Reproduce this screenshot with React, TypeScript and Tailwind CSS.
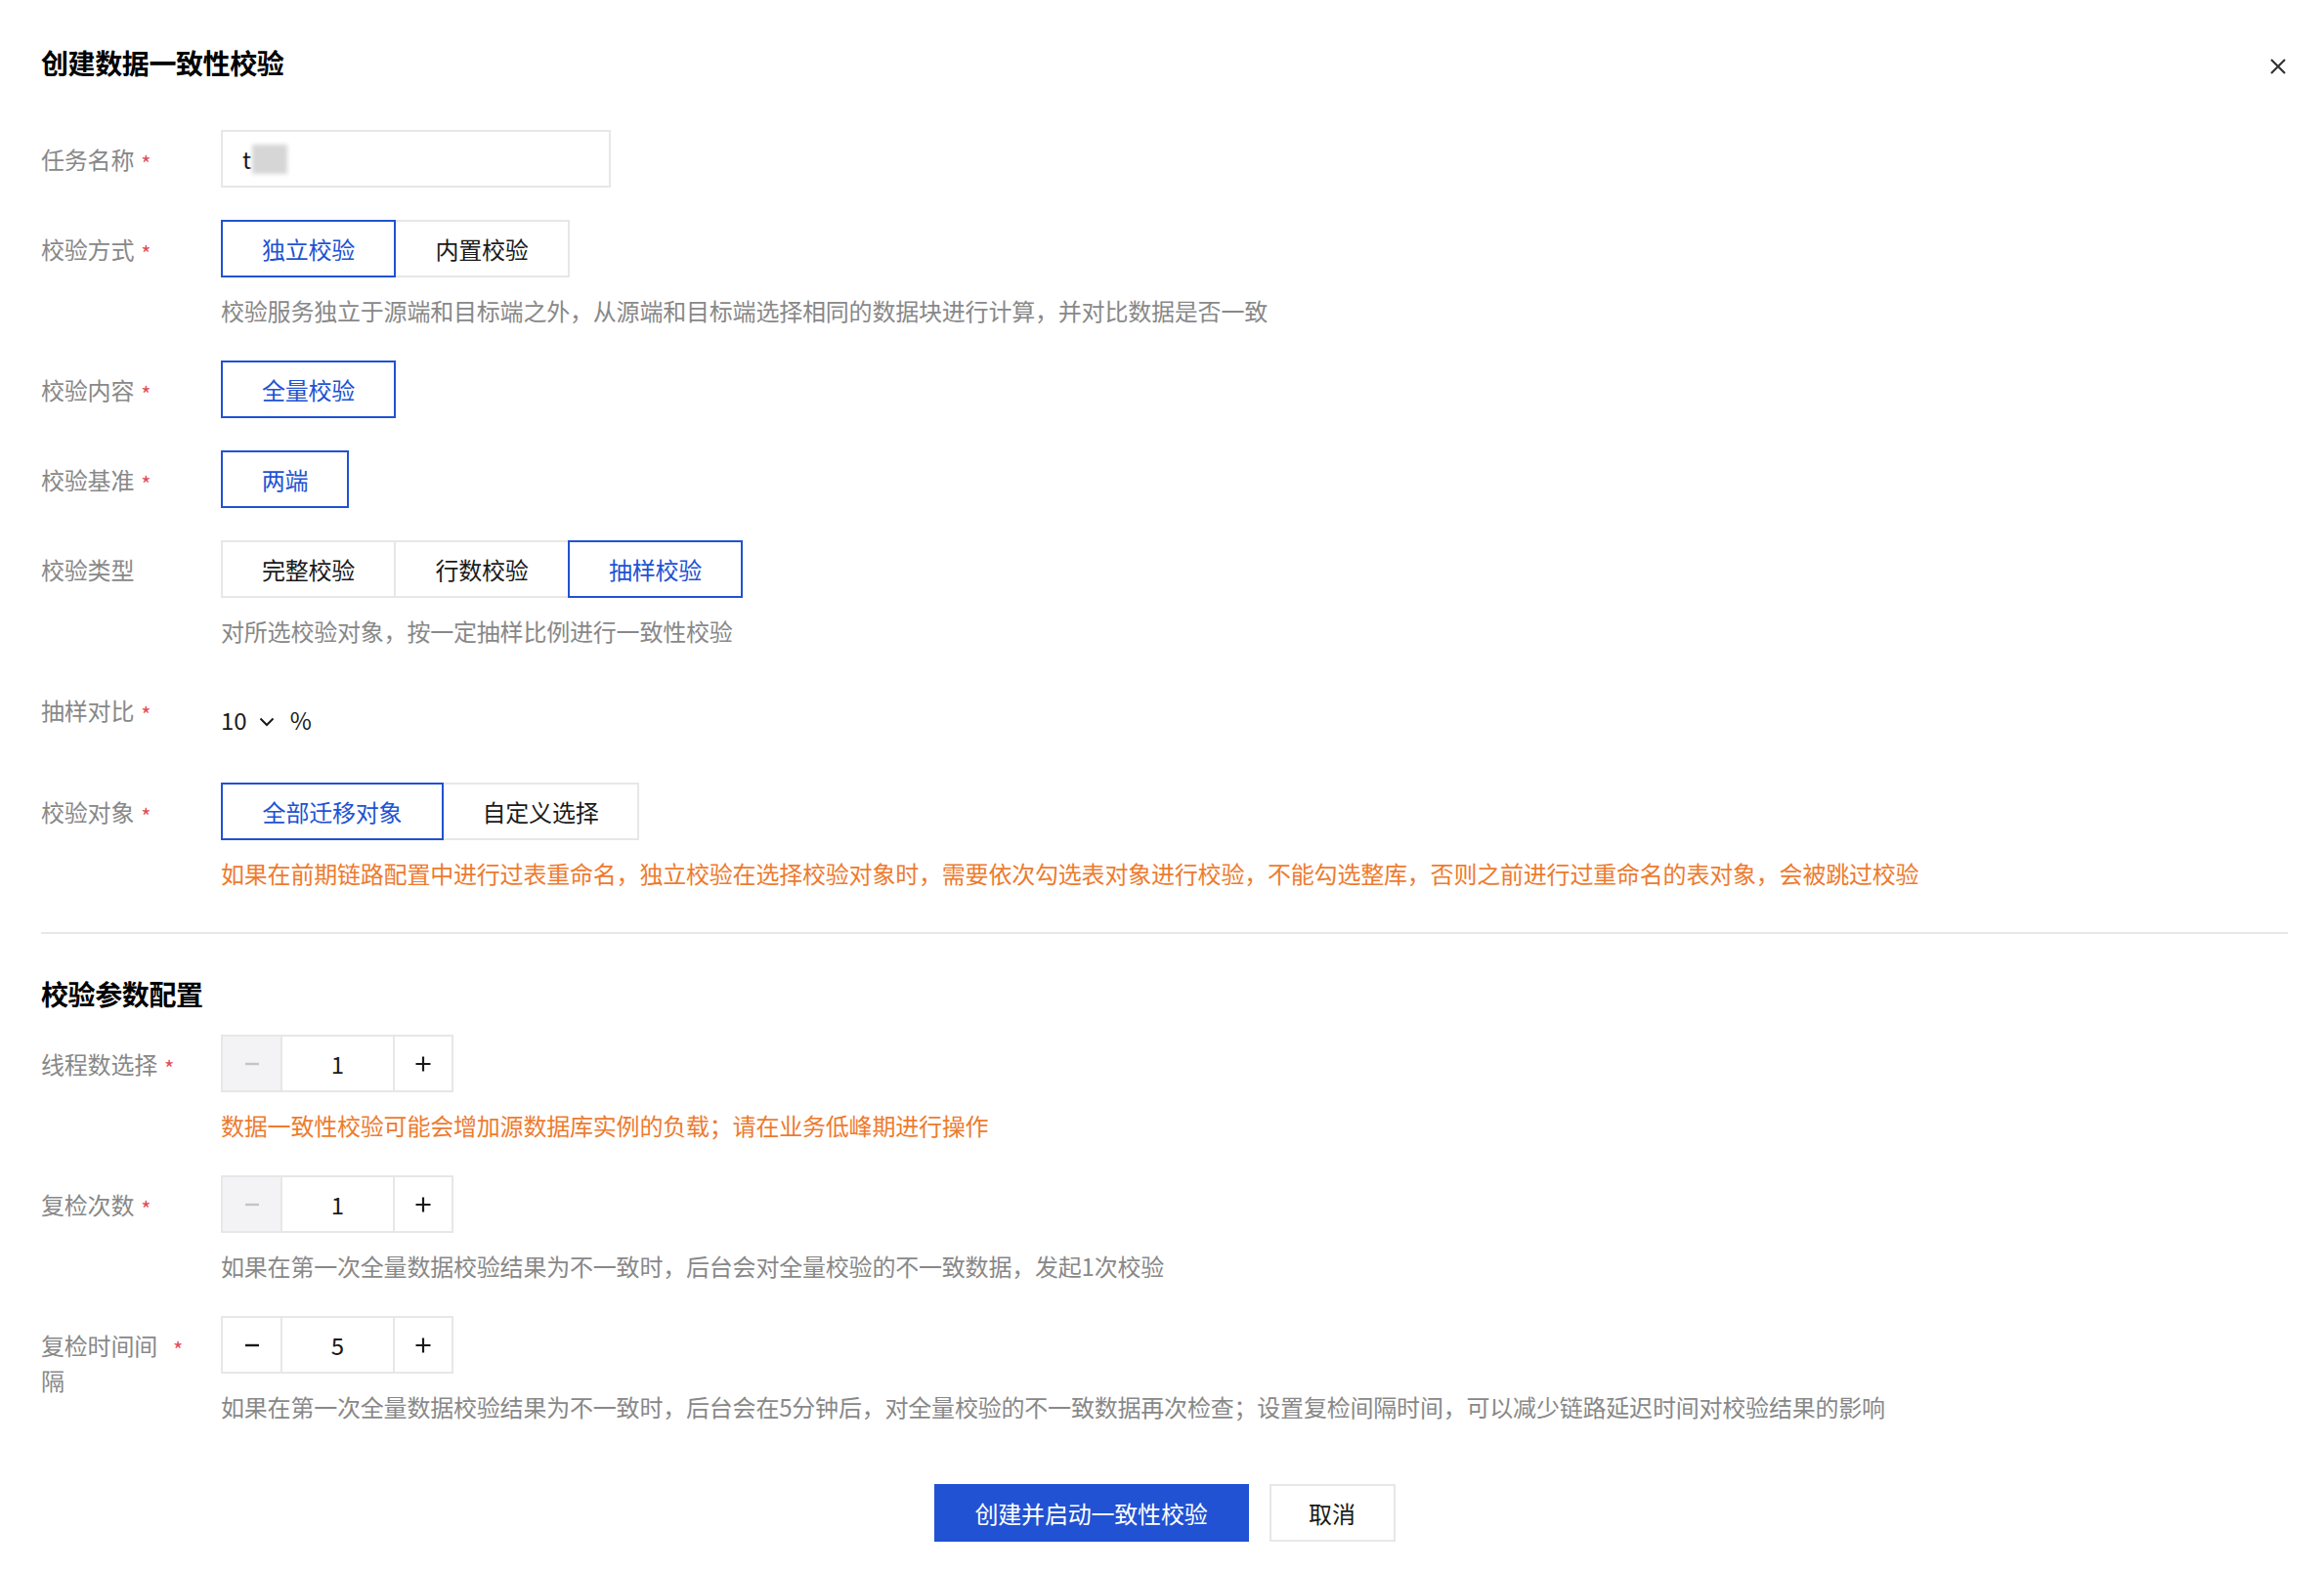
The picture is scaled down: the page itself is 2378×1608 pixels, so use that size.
import type { ReactNode } from "react";

const BLUE = "text-[#2152d3]";

function Star() {
  return <span className="ml-[7px] shrink-0 translate-y-[3px] text-[22px] text-[#e34d59]">*</span>;
}

function Label({ children, required }: { children: ReactNode; required?: boolean }) {
  return (
    <div className="flex w-[184px] shrink-0 items-start pr-[39px] pt-[12px] text-[24px] leading-[36px] tracking-[-0.2px] text-[#888888]">
      <span>{children}</span>
      {required && <Star />}
    </div>
  );
}

function Hint({ children, warn }: { children: ReactNode; warn?: boolean }) {
  return (
    <p className={`mt-[16px] text-[24px] leading-[36px] tracking-[-0.2px] ${warn ? "text-[#ed7b2f]" : "text-[#888888]"}`}>{children}</p>
  );
}

function Item({ label, required, children, hint, warn, last }: { label: ReactNode; required?: boolean; children: ReactNode; hint?: ReactNode; warn?: boolean; last?: boolean }) {
  return (
    <div className={`flex items-start ${last ? "" : "mb-[33px]"}`}>
      <Label required={required}>{label}</Label>
      <div className="flex flex-col">
        {children}
        {hint && <Hint warn={warn}>{hint}</Hint>}
      </div>
    </div>
  );
}

function Segmented({ options, active }: { options: { label: string; w: number }[]; active: number }) {
  return (
    <div className="flex">
      {options.map((o, i) => (
        <button
          key={o.label}
          style={{ width: o.w }}
          className={`flex h-[59px] items-center justify-center border-2 text-[24px] tracking-[-0.2px] ${i > 0 ? "-ml-[2px]" : ""} ${
            i === active ? `relative z-10 border-[#2152d3] ${BLUE}` : "border-[#e7e7e7] text-[#1a1a1a]"
          }`}
        >
          {o.label}
        </button>
      ))}
    </div>
  );
}

function Minus({ color }: { color: string }) {
  return (
    <svg width="18" height="18" viewBox="0 0 18 18">
      <path d="M2 9h14" stroke={color} strokeWidth="2.4" />
    </svg>
  );
}

function Plus() {
  return (
    <svg width="18" height="18" viewBox="0 0 18 18">
      <path d="M1.5 9h15M9 1.5v15" stroke="#1a1a1a" strokeWidth="2.2" />
    </svg>
  );
}

function Stepper({ value, disabled }: { value: string; disabled?: boolean }) {
  return (
    <div className="flex h-[59px] w-[238px] border-2 border-[#e7e7e7]">
      <div className={`flex w-[59px] items-center justify-center ${disabled ? "bg-[#f3f3f5]" : "bg-white"}`}>
        <Minus color={disabled ? "#c4c4c4" : "#1a1a1a"} />
      </div>
      <div className="flex w-[117px] items-center justify-center border-x-2 border-[#e7e7e7] text-[24px] text-[#1a1a1a]">{value}</div>
      <div className="flex w-[58px] items-center justify-center">
        <Plus />
      </div>
    </div>
  );
}

export default function App() {
  return (
    <div className="min-h-screen bg-white pl-[42px] pr-[37px] pt-[44px] font-['Noto_Sans_CJK_SC','Noto_Sans',sans-serif]">
      <div className="flex h-[40px] items-center justify-between">
        <h1 className="text-[28px] font-bold leading-[40px] tracking-[-0.4px] text-[#000000]">创建数据一致性校验</h1>
        <svg className="mr-[1px] mt-[8px]" width="18" height="18" viewBox="0 0 18 18">
          <path d="M2 2l14 14M16 2L2 16" stroke="#333333" strokeWidth="2.2" />
        </svg>
      </div>

      <div className="mt-[49px]">
        <Item label="任务名称" required>
          <div className="flex h-[59px] w-[399px] items-center border-2 border-[#e7e7e7] pl-[20px] text-[24px] text-[#1a1a1a]">
            <span>t</span>
            <span className="ml-[1px] inline-block h-[30px] w-[36px] bg-[#d6d6d6] blur-[2px]" />
          </div>
        </Item>

        <Item label="校验方式" required hint="校验服务独立于源端和目标端之外，从源端和目标端选择相同的数据块进行计算，并对比数据是否一致">
          <Segmented active={0} options={[{ label: "独立校验", w: 179 }, { label: "内置校验", w: 180 }]} />
        </Item>

        <Item label="校验内容" required>
          <Segmented active={0} options={[{ label: "全量校验", w: 179 }]} />
        </Item>

        <Item label="校验基准" required>
          <Segmented active={0} options={[{ label: "两端", w: 131 }]} />
        </Item>

        <Item label="校验类型" hint="对所选校验对象，按一定抽样比例进行一致性校验">
          <Segmented
            active={2}
            options={[
              { label: "完整校验", w: 179 },
              { label: "行数校验", w: 180 },
              { label: "抽样校验", w: 179 },
            ]}
          />
        </Item>

        <Item label="抽样对比" required>
          <div className="flex h-[71px] items-start pt-[22px]">
            <div className="flex h-[36px] items-center text-[24px] text-[#1a1a1a]">
              <span>10</span>
              <svg className="ml-[12px] mt-[3px]" width="16" height="10" viewBox="0 0 16 10">
                <path d="M1.5 1.5L8 8l6.5-6.5" fill="none" stroke="#1a1a1a" strokeWidth="2" />
              </svg>
              <span className="ml-[16px]">%</span>
            </div>
          </div>
        </Item>

        <Item
          label="校验对象"
          required
          warn
          last
          hint="如果在前期链路配置中进行过表重命名，独立校验在选择校验对象时，需要依次勾选表对象进行校验，不能勾选整库，否则之前进行过重命名的表对象，会被跳过校验"
        >
          <Segmented active={0} options={[{ label: "全部迁移对象", w: 228 }, { label: "自定义选择", w: 202 }]} />
        </Item>
      </div>

      <div className="mt-[42px] h-[2px] bg-[#e7e7e7]" />

      <h2 className="mb-[22px] mt-[41px] text-[28px] font-bold leading-[40px] tracking-[-0.4px] text-[#000000]">校验参数配置</h2>

      <Item label="线程数选择" required warn hint="数据一致性校验可能会增加源数据库实例的负载；请在业务低峰期进行操作">
        <Stepper value="1" disabled />
      </Item>

      <Item label="复检次数" required hint="如果在第一次全量数据校验结果为不一致时，后台会对全量校验的不一致数据，发起1次校验">
        <Stepper value="1" disabled />
      </Item>

      <Item
        label="复检时间间隔"
        required
        last
        hint="如果在第一次全量数据校验结果为不一致时，后台会在5分钟后，对全量校验的不一致数据再次检查；设置复检间隔时间，可以减少链路延迟时间对校验结果的影响"
      >
        <Stepper value="5" />
      </Item>

      <div className="mt-[61px] flex justify-center gap-[21px]">
        <button className="h-[59px] w-[322px] bg-[#2152d3] text-[24px] tracking-[-0.2px] text-white">创建并启动一致性校验</button>
        <button className="h-[59px] w-[129px] border-2 border-[#e7e7e7] text-[24px] text-[#1a1a1a]">取消</button>
      </div>
    </div>
  );
}
